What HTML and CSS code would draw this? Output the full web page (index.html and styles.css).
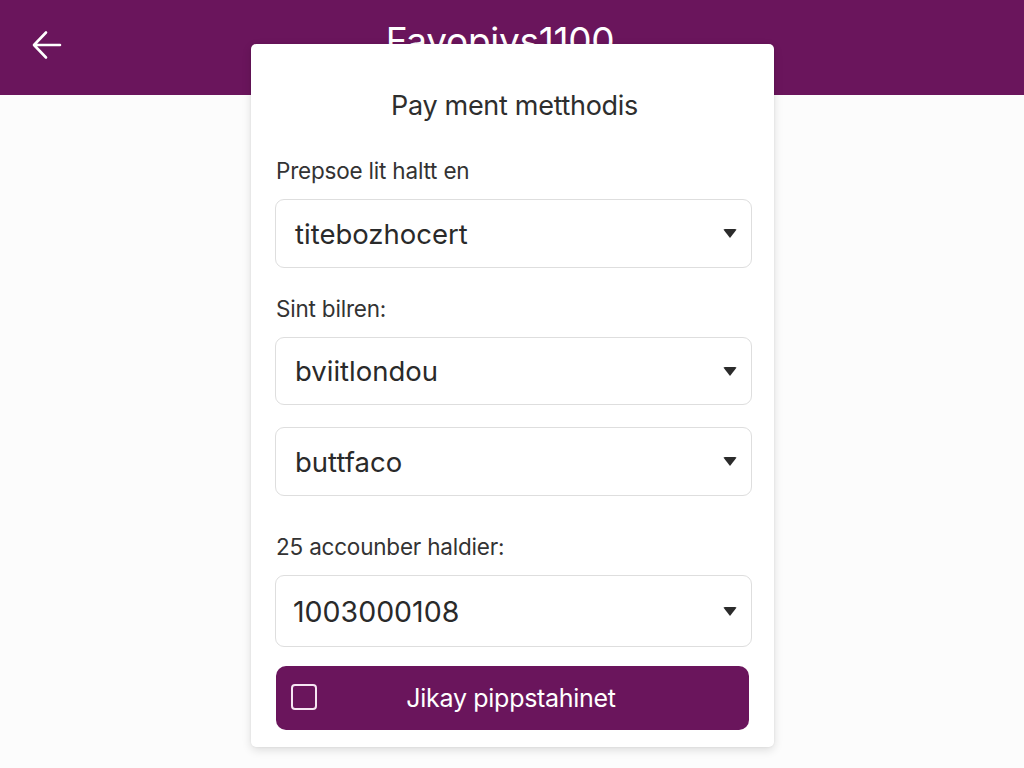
FILE: index.html
```html
<!DOCTYPE html>
<html>
<head>
<meta charset="utf-8">
<link rel="stylesheet" href="styles.css">
</head>
<body>
<header class="topbar">
  <span class="back" aria-label="Back">
    <svg width="32" height="34" viewBox="0 0 32 34" fill="none" stroke="#fff" stroke-width="2.6" stroke-linecap="round" stroke-linejoin="round"><path d="M29 17H3.5M15 4.5L3 17L15 29.5"/></svg>
  </span>
  <h1 class="apptitle">Favopiys1100</h1>
</header>
<main class="page">
  <section class="card">
    <h2 class="card-title">Pay ment metthodis</h2>
    <label class="field-label l1">Prepsoe lit haltt en</label>
    <div class="select s1"><span>titebozhocert</span><i class="caret"></i></div>
    <label class="field-label l2">Sint bilren:</label>
    <div class="select s2"><span>bviitlondou</span><i class="caret"></i></div>
    <div class="select s3"><span>buttfaco</span><i class="caret"></i></div>
    <label class="field-label l3">25 accounber haldier:</label>
    <div class="select s4"><span>1003000108</span><i class="caret"></i></div>
    <button class="pay"><span class="box"></span><span class="pay-text">Jikay pippstahinet</span></button>
  </section>
</main>
</body>
</html>
```
FILE: styles.css
```css
* { box-sizing: border-box; }
html, body { margin: 0; padding: 0; }
body {
  width: 1024px;
  height: 768px;
  overflow: hidden;
  background: #fcfcfc;
  font-family: Inter, "Noto Sans", "Liberation Sans", sans-serif;
  color: #2b2b2b;
}
.topbar {
  height: 95px;
  background: #6a155c;
  display: flex;
  align-items: flex-start;
  padding: 28px 0 0 31px;
  position: relative;
}
.back { display: block; width: 32px; height: 34px; }
.apptitle {
  margin: 0;
  position: absolute;
  left: 0; right: 24px; top: 21px;
  text-align: center;
  font-weight: 400;
  font-size: 37px;
  line-height: 40px;
  color: #fff;
  letter-spacing: -0.3px;
}
.page {
  display: flex;
  justify-content: center;
  margin-top: -51px;
  position: relative;
  z-index: 1;
}
.card {
  width: 523px;
  height: 703px;
  margin-left: 1px;
  background: #fff;
  border-radius: 5px;
  box-shadow: 0 3px 10px rgba(0,0,0,0.13), 0 0 2px rgba(0,0,0,0.08);
  padding: 45px 22px 0 24px;
  display: flex;
  flex-direction: column;
}
.card-title {
  margin: 0;
  text-align: center;
  font-weight: 400;
  font-size: 27px;
  line-height: 34px;
  color: #2e2e2e;
  letter-spacing: -0.3px;
  padding-left: 2px;
}
.field-label {
  display: block;
  font-size: 22.5px;
  line-height: 28px;
  color: #333;
  padding-left: 1px;
  letter-spacing: -0.2px;
}
.l1 { margin-top: 34px; }
.l2 { margin-top: 27px; }
.l3 { margin-top: 37px; }
.select {
  margin-top: 14px;
  height: 69px;
  border: 1.5px solid #dedede;
  border-radius: 9px;
  display: flex;
  align-items: center;
  justify-content: space-between;
  padding: 0 14px 0 19px;
  font-size: 27.5px;
  color: #2a2a2a;
  background: #fff;
}
.s2 { height: 68px; }
.s3 { margin-top: 22px; height: 69px; }
.s4 { height: 72px; font-size: 28.5px; padding-left: 17px; }
.caret {
  width: 0; height: 0;
  border-left: 7px solid transparent;
  border-right: 7px solid transparent;
  border-top: 9px solid #2b2b2b;
  border-radius: 2px;
}
.pay {
  margin-top: 19px;
  height: 64px;
  width: 473px;
  margin-left: 1px;
  border: 0;
  border-radius: 10px;
  background: #6a155c;
  color: #fff;
  font-family: inherit;
  font-size: 25px;
  display: flex;
  align-items: center;
  padding: 0 0 0 15px;
  cursor: pointer;
}
.box {
  width: 26px; height: 26px;
  border: 2px solid #f6e6f3;
  border-radius: 4px;
  flex: none;
  margin-top: -2px;
}
.pay-text {
  flex: 1;
  text-align: center;
  margin-right: 44px;
  letter-spacing: -0.3px;
}
```
